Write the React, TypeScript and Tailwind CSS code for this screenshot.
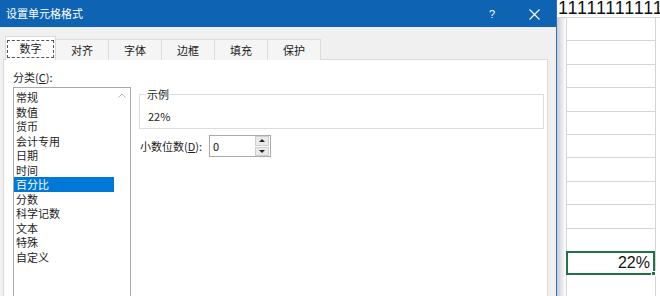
import React from "react";

const items = ["常规", "数值", "货币", "会计专用", "日期", "时间", "百分比", "分数", "科学记数", "文本", "特殊", "自定义"];
const tabs = ["数字", "对齐", "字体", "边框", "填充", "保护"];

export default function App() {
  const cjk = { fontFamily: '"Noto Sans CJK SC", "Noto Sans", sans-serif' };
  return (
    <div className="flex w-[660px] h-[296px] overflow-hidden bg-white" style={cjk}>
      {/* Dialog */}
      <div className="w-[557px] h-full flex flex-col bg-[#f0f0f0] border-r border-[#2f6fb5] shrink-0">
        <div className="h-[27px] bg-[#0e63b3] flex items-center pl-[6px] pr-[16px] text-white shrink-0">
          <span className="text-[11px] leading-none">设置单元格格式</span>
          <span className="ml-auto text-[11px] leading-none mr-[34px] mt-[1px]" style={{ fontFamily: '"Liberation Sans", sans-serif' }}>?</span>
          <svg width="11" height="11" viewBox="0 0 11 11" className="mt-[1px]">
            <path d="M0.5 0.5 L10.5 10.5 M10.5 0.5 L0.5 10.5" stroke="#ffffff" strokeWidth="1.1" />
          </svg>
        </div>
        <div className="flex-1 pt-[9px] pl-[3px] pr-[8px] flex flex-col">
          <div className="flex items-end pl-[2px] h-[24px] relative z-10">
            {tabs.map((t, i) =>
              i === 0 ? (
                <div key={t} className="w-[51px] h-[24px] bg-white border border-b-0 border-[#d9d9d9] flex items-center justify-center">
                  <span className="w-[47px] h-[18px] border border-dashed border-[#555] flex items-center justify-center text-[11px] text-[#222]">{t}</span>
                </div>
              ) : (
                <div key={t} className="w-[53px] h-[21px] bg-[#f5f5f5] border border-l-0 border-b-0 border-[#dcdcdc] flex items-center justify-center text-[11px] text-[#222]">
                  {t}
                </div>
              )
            )}
          </div>
          <div className="flex-1 bg-white border border-[#d9d9d9] -mt-px pl-[9px] pt-[10px]">
            <div className="text-[11px] text-[#222] leading-[14px]">
              分类(<span className="underline">C</span>):
            </div>
            <div className="flex mt-[3px]">
              <div className="w-[118px] h-[220px] border border-[#a9a9a9] flex shrink-0">
                <div className="w-[100px] pt-[2px] flex flex-col">
                  {items.map((it) => (
                    <div
                      key={it}
                      className={
                        "h-[14.55px] leading-[14.55px] text-[11px] pl-[2px] " +
                        (it === "百分比" ? "bg-[#0078d7] text-white" : "text-[#222]")
                      }
                    >
                      {it}
                    </div>
                  ))}
                </div>
                <div className="flex-1 flex justify-center pt-[5px]">
                  <svg width="8" height="5" viewBox="0 0 8 5">
                    <path d="M0.5 4.5 L4 1 L7.5 4.5" stroke="#b8b8b8" strokeWidth="1" fill="none" />
                  </svg>
                </div>
              </div>
              <div className="ml-[8px] flex-1 pr-[3px]">
                <fieldset className="border border-[#dcdcdc] h-[41px] pl-[6px] pr-[6px] mt-[1px]">
                  <legend className="text-[11px] text-[#222] px-[1px] leading-[13px]">示例</legend>
                  <div className="text-[11px] text-[#222] pl-[2px] mt-[8px] leading-[14px]">22%</div>
                </fieldset>
                <div className="flex items-center mt-[6px]">
                  <span className="text-[11px] text-[#222] w-[70px] pl-[1px]">
                    小数位数(<span className="underline">D</span>):
                  </span>
                  <div className="w-[62px] h-[22px] border border-[#a9a9a9] flex items-center">
                    <span className="text-[11px] text-[#111] pl-[3px] flex-1">0</span>
                    <div className="w-[14px] h-[20px] mr-px flex flex-col gap-px">
                      <div className="flex-1 bg-[#eaeaea] border border-[#cfcfcf] flex items-center justify-center">
                        <svg width="6" height="3" viewBox="0 0 6 3"><path d="M0 3 L3 0 L6 3 Z" fill="#222" /></svg>
                      </div>
                      <div className="flex-1 bg-[#eaeaea] border border-[#cfcfcf] flex items-center justify-center">
                        <svg width="6" height="3" viewBox="0 0 6 3"><path d="M0 0 L3 3 L6 0 Z" fill="#222" /></svg>
                      </div>
                    </div>
                  </div>
                </div>
              </div>
            </div>
          </div>
        </div>
      </div>
      {/* Spreadsheet */}
      <div className="flex-1 flex flex-col" style={{ fontFamily: '"Liberation Sans", sans-serif' }}>
        <div className="h-[18px] border-b border-[#d4d4d4] text-[18px] leading-[16px] pl-[1px] tracking-[0.8px] text-[#111] whitespace-nowrap overflow-visible shrink-0">
          11111111111
        </div>
        <div className="flex-1 flex">
          <div className="w-[9px] bg-gradient-to-r from-[#c9ccd4] to-[#ffffff] shrink-0"></div>
          <div className="w-[90px] border-l border-r border-[#d4d4d4] flex flex-col shrink-0">
            {Array.from({ length: 10 }).map((_, i) => (
              <div key={i} className="h-[23.4px] border-b border-[#d4d4d4] shrink-0" />
            ))}
            <div className="h-[24px] border-2 border-[#217346] -ml-px -mt-px flex items-center justify-end pr-[3px] text-[16px] text-[#111] relative shrink-0">
              22%
              <div className="absolute -right-[3px] -bottom-[3px] w-[5px] h-[5px] bg-[#217346] border border-white" />
            </div>
          </div>
        </div>
      </div>
    </div>
  );
}
